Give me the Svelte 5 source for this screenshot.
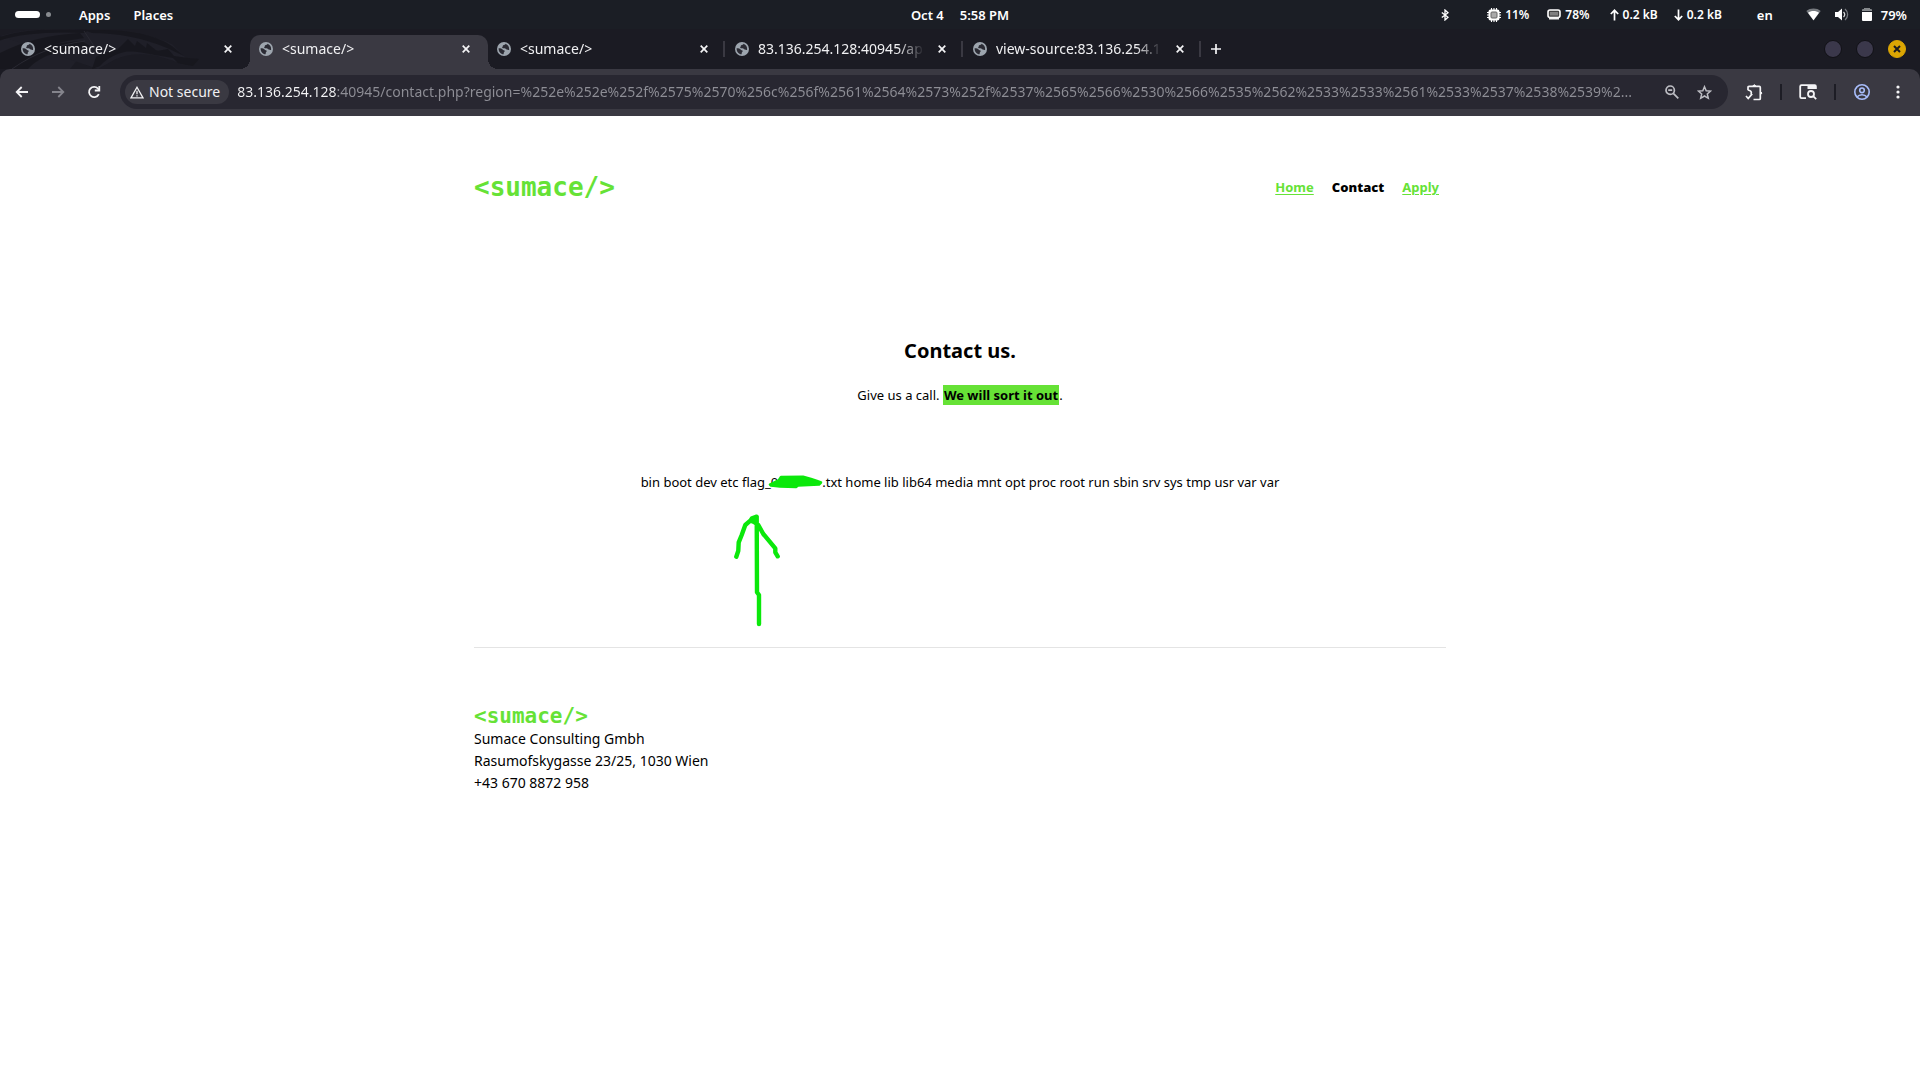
<script>
  const tabs = [
    { title: '<sumace/>' },
    { title: '<sumace/>', active: true },
    { title: '<sumace/>', divider: true },
    { title: '83.136.254.128:40945/apply.php', divider: true },
    { title: 'view-source:83.136.254.128:40945', divider: true }
  ];
  const host = '83.136.254.128';
  const path = ':40945/contact.php?region=%252e%252e%252f%2575%2570%256c%256f%2561%2564%2573%252f%2537%2565%2566%2530%2566%2535%2562%2533%2533%2561%2533%2537%2538%2539%2...';
</script>

<div class="desktop">
  <header class="system">
    <div class="side">
      <button class="spaces" aria-label="Workspaces"><i class="current"></i><i class="dot"></i></button>
      <button class="apps">Apps</button>
      <button>Places</button>
    </div>
    <button class="clock"><span>Oct 4</span><span>5:58 PM</span></button>
    <div class="side status">
      <svg class="bt" width="8" height="12" viewBox="0 0 8 12" fill="none" stroke="#fff" stroke-width="1.3"><path d="M.8 3.4 7 8.3 4 11V1l3 2.7L.8 8.6" /></svg>
      <span class="stat cpu">
        <svg width="14" height="14" viewBox="0 0 14 14"><path d="M4.500 0v14M7 0v14M9.500 0v14M0 4.500h14M0 7h14M0 9.500h14" stroke="#fff" stroke-width="1.100" /><rect x="1.500" y="1.500" width="11" height="11" rx="2" fill="#fff" /><rect x="4" y="4" width="6" height="6" rx="1" fill="#aaa" stroke="#666" /></svg>
        11%
      </span>
      <span class="stat ram">
        <svg width="14" height="11" viewBox="0 0 14 11"><rect x="1" y="1" width="12" height="7.500" rx="2" fill="#444" stroke="#fff" stroke-width="1.600" /><path d="M4 3v3.500M6 3v3.500M8 3v3.500M10 3v3.500" stroke="#bbb" /><path d="M2 8.500h10v2H2z" fill="#eee" /></svg>
        78%
      </span>
      <span class="stat up"><svg width="9" height="12" viewBox="0 0 9 12" fill="none" stroke="#fff" stroke-width="1.700"><path d="M4.500 11.500V1.500M.8 5l3.700-3.700L8.200 5" /></svg>0.2 kB</span>
      <span class="stat down"><svg width="9" height="12" viewBox="0 0 9 12" fill="none" stroke="#fff" stroke-width="1.700"><path d="M4.500.5v10M.8 7l3.700 3.700L8.200 7" /></svg>0.2 kB</span>
      <button class="lang">en</button>
      <button class="tray" aria-label="System menu, battery 79%">
        <svg width="15" height="13" viewBox="0 0 15 13"><path d="M.3 3C4-.3 11-.3 14.700 3L7.500 12.500z" fill="#777b80" /><path d="M2 4.800C5 2.300 10 2.300 13 4.800L7.500 12.300z" fill="#fff" /></svg>
        <svg width="15" height="13" viewBox="0 0 15 13"><path d="M1 4h3l4-3.500v12L4 9H1z" fill="#fff" /><path d="M9.500 4c1.500 1.500 1.500 3.500 0 5" stroke="#ddd" stroke-width="1.200" fill="none" /><path d="M11 1c3.500 3 3.500 8 0 11" stroke="#777b80" stroke-width="1.300" fill="none" /></svg>
        <svg width="10" height="13" viewBox="0 0 10 13"><path d="M0 3V2q0-1 1-1h1V0h6v1h1q1 0 1 1v1z" fill="#85888c" /><path d="M0 4h10v8q0 1-1 1H1q-1 0-1-1z" fill="#fff" /></svg>
        <span>79%</span>
      </button>
    </div>
  </header>

  <nav class="strip" aria-label="Tabs">
    <svg class="dragon" width="204" height="40" viewBox="0 0 204 40" aria-hidden="true">
      <path d="M0 12C14 4 34 1 58 2l26 1 12 9-14 13-12 15H0z" fill="#202029" />
      <path d="M0 7C24 0 50-1 84 1c40-1 70 5 88 14l14 14 12 1-8 6-14-3c-18-7-40-12-62-2l-16 9" fill="#1f1f28" />
      <path d="M0 8C24 0 50 0 88 1l-3 3C50 2 20 5 0 11zM0 24C24 12 48 6 80 4l4 5C54 13 30 22 12 40H0zM84 1h18c25 0 52 4 70 16l12 10-17-8C144 9 116 4 92 4zM8 36C28 19 52 14 82 12l8 5C56 22 40 27 28 40H6zM128 10l7 7 2-5 9 7 1-5 10 8 11-2 6 7 14 2 11 1-6 7-15-3-5-5-18-3c-15-3-27-5-40-3zM96 28c20-10 45-12 66-5-25-4-48-2-62 14l-8 3z" fill="#16161c" opacity=".85" />
      <path d="M12 40C36 23 58 16 85 12M84 2l10 15" stroke="#292932" fill="none" />
    </svg>
    {#each tabs as tab}
      <div class="tab" class:active={tab.active} class:divider={tab.divider}>
        <svg width="14" height="14" viewBox="0 0 14 14"><circle cx="7" cy="7" r="7" fill="#9da5ae" /><path d="M1.600 6.300c2 .1 3.500.2 4 1.300s1.800.3 2 1.400-.9 1-.9 2v1.300C4 12.500 1.500 10 1.600 6.300zM8.500 1.700c-.1 1.300-1.500 1.100-2.300 1.500s-.2 1.600-.9 2 .5 1.300 1.900 1.100 1.600 1.100 2.600 1.300 1.500.8 2.300.3C12.500 5 11 2.500 8.500 1.700z" fill="#2b2b34" /></svg>
        <button class="title">{tab.title}</button>
        <button aria-label="Close tab"><svg width="8" height="8" viewBox="0 0 8 8"><path d="M.7.7l6.600 6.600M7.300.7.7 7.300" stroke="#f4f4f6" stroke-width="1.700" /></svg></button>
      </div>
    {/each}
    <button class="new" aria-label="New tab"><svg width="10" height="10" viewBox="0 0 10 10"><path d="M5 0v10M0 5h10" stroke="#f4f4f6" stroke-width="1.700" /></svg></button>
    <div class="window">
      <button aria-label="Minimize"></button>
      <button aria-label="Maximize"></button>
      <button class="quit" aria-label="Close window"><svg width="8" height="8" viewBox="0 0 8 8"><path d="M1 1l6 6M7 1 1 7" stroke="#1b1b20" stroke-width="2" /></svg></button>
    </div>
  </nav>

  <div class="toolbarback">
    <div class="toolbar">
      <button class="tool" aria-label="Back"><svg width="14" height="12" viewBox="0 0 14 12" fill="none" stroke="#f4f4f6" stroke-width="1.800"><path d="M13 6H1.800M6.700 1l-5 5 5 5" /></svg></button>
      <button class="tool" aria-label="Forward" disabled><svg width="14" height="12" viewBox="0 0 14 12" fill="none" stroke="#84848c" stroke-width="1.800"><path d="M1 6h11.200M7.300 1l5 5-5 5" /></svg></button>
      <button class="tool" aria-label="Reload"><svg width="14" height="14" viewBox="0 0 14 14" fill="none" stroke="#f4f4f6" stroke-width="1.800"><path d="M11.800 9.100A5.100 5.100 0 1 1 11 3.600l1.200 1.300" /><path d="M12.300 1v4.500H7.800" /></svg></button>
      <div class="address">
        <button class="secure"><svg width="14" height="13" viewBox="0 0 14 13" fill="none" stroke="#f0f0f2" stroke-width="1.300"><path d="M7 1.300 13 11.900H1zM7 4.800v3.400M7 9.200v1.300" /></svg>Not secure</button>
        <input aria-label="Address" value={host + path} spellcheck="false" />
        <button class="pic" aria-label="Zoom"><svg width="14" height="14" viewBox="0 0 14 14" fill="none" stroke="#bdbdc3" stroke-width="1.700"><circle cx="5.200" cy="5.200" r="4.200" /><path d="m8.300 8.300 5 5M3.200 5.200h4" /></svg></button>
        <button class="pic" aria-label="Bookmark this page"><svg width="15" height="15" viewBox="0 0 15 15" fill="none" stroke="#bdbdc3" stroke-width="1.500"><path d="m7.500 1.700 1.700 4 4.400.4-3.300 2.900 1 4.300-3.800-2.300-3.800 2.300 1-4.300L1.400 6.100l4.400-.4z" /></svg></button>
      </div>
      <button class="tool" aria-label="Extensions"><svg width="18" height="17" viewBox="0 0 18 17" fill="none" stroke="#f4f4f6" stroke-width="1.700"><path d="M3 6.200V3.400Q3 2.400 4 2.400H14.300Q15.300 2.400 15.300 3.400V14.500Q15.300 15.500 14.300 15.500H8.500M3 6C6 6.500 7 8 6 10.400M1 12l2.200 2.500 4-4.600" /><path d="M7.600 2.200Q9.300-.8 11 2.200zM15.500 7.500q3 1.500 0 3.200z" fill="#f4f4f6" stroke-width="1" /></svg></button>
      <i class="rule"></i>
      <button class="tool" aria-label="Search with Lens"><svg width="18" height="16" viewBox="0 0 18 16" fill="none" stroke="#f4f4f6" stroke-width="1.800"><path d="M7 14.100H2.500Q1.200 14.100 1.200 12.800V2.500Q1.200 1.200 2.500 1.200h13.200q1.200 0 1.200 1.300V5" /><path d="M8.500 1h8.500v4H8.500z" fill="#f4f4f6" stroke="none" /><circle cx="12" cy="10" r="3" /><path d="m14.200 12.200 3 3" /></svg></button>
      <i class="rule"></i>
      <button class="tool" aria-label="Profile"><svg width="16" height="16" viewBox="0 0 16 16" fill="none" stroke="#a8bdfa" stroke-width="1.600"><circle cx="8" cy="8" r="7.200" /><circle cx="8" cy="6.300" r="2.300" /><path d="M3 13c2.500-3 7.500-3 10 0" /></svg></button>
      <button class="tool" aria-label="Menu"><svg width="4" height="14" viewBox="0 0 4 14" fill="#f4f4f6"><circle cx="2" cy="2" r="1.600" /><circle cx="2" cy="7" r="1.600" /><circle cx="2" cy="12" r="1.600" /></svg></button>
    </div>
  </div>

  <main class="page">
    <header class="masthead">
      <div class="logo">&lt;sumace/&gt;</div>
      <nav class="menu"><a href="#home">Home</a><strong>Contact</strong><a href="#apply">Apply</a></nav>
    </header>
    <section>
      <h1>Contact us.</h1>
      <p>Give us a call. <mark>We will sort it out</mark>.</p>
      <p class="listing">bin boot dev etc flag_<span class="hidden">0<svg width="110" height="162" viewBox="0 0 110 162" fill="none" stroke="#0be80b" stroke-linecap="round" stroke-linejoin="round" aria-hidden="true">
        <path d="M41 17.500 45 15.500 50 13 52 10 74 9.700 82 12 88 14 92 15.500 90 17.500 69 18.500 67 20 51 19.500 42 18.500z" fill="#0be80b" stroke-width="2.500" />
        <path d="M7.300 89.700 9.300 83.700 9.700 75.300 12.700 68 16.300 58 21.300 53.700 23 51.300 27.700 49.700 28 125.300 30 128V157M22 53.700 25 55 29.300 58 34.300 67 46.300 81.300V85.300L48.700 89.300" stroke-width="4.400" />
      </svg></span>.txt home lib lib64 media mnt opt proc root run sbin srv sys tmp usr var var</p>
    </section>
    <footer>
      <div class="logo small">&lt;sumace/&gt;</div>
      <address>Sumace Consulting Gmbh<br />Rasumofskygasse 23/25, 1030 Wien<br />+43 670 8872 958</address>
    </footer>
  </main>
</div>

<style>
  :global(body) { margin: 0; background: #fff; }
  .desktop { min-height: 100vh; font: 14px/20px "Noto Sans", "Open Sans", sans-serif; color: #000; }
  button { border: 0; padding: 0; background: none; color: inherit; font: inherit; flex: none; }
  svg { display: block; flex: none; }

  .system { display: grid; grid-template-columns: 1fr auto 1fr; align-items: center; height: 29px; background: #1b1e25; color: #fff; font-size: 13px; font-weight: 600; }
  .side { display: flex; align-items: center; padding-left: 15px; }
  .spaces { display: flex; align-items: center; gap: 6px; }
  .current { width: 25px; height: 7px; border-radius: 4px; background: #fff; }
  .dot { width: 5px; height: 5px; border-radius: 50%; background: #888b8f; }
  .apps { margin: 0 23px 0 28px; }
  .clock { display: flex; gap: 16px; }
  .status { justify-content: flex-end; padding: 0 13px 0 0; }
  .stat { display: flex; align-items: center; gap: 4px; font-size: 12px; white-space: nowrap; }
  .cpu { margin-left: 38px; }
  .ram { margin-left: 18px; }
  .down { margin-left: 16px; }
  .up { margin-left: 20px; }
  .lang { margin-left: 35px; }
  .tray { display: flex; align-items: center; gap: 13px; margin-left: 33px; }
  .tray span { margin-left: -4px; }

  .strip { position: relative; display: flex; align-items: center; height: 40px; padding: 0 14px 0 12px; background: #1b1b23; color: #f0f0f2; }
  .dragon { position: absolute; left: 0; top: 0; }
  .tab { position: relative; display: flex; align-items: center; flex: 0 1 238px; min-width: 0; height: 34px; margin-top: 6px; box-sizing: border-box; padding: 0 18px 6px 9px; }
  .active { background: #3a3942; border-radius: 10px 10px 0 0; }
  .active::before, .active::after { content: ""; position: absolute; bottom: 0; width: 10px; height: 10px; background: radial-gradient(circle at 0 0, transparent 10px, #3a3942 10px); }
  .active::before { right: 100%; }
  .active::after { left: 100%; background: radial-gradient(circle at 100% 0, transparent 10px, #3a3942 10px); }
  .divider::after { content: ""; position: absolute; right: 1px; top: 6px; width: 2px; height: 16px; background: #3a3942; }
  .title { flex: 1; min-width: 0; margin: 0 14px 0 9px; overflow: hidden; text-align: left; white-space: nowrap; mask-image: linear-gradient(90deg, #000 calc(100% - 26px), transparent); }
  .new { margin-left: 9px; }
  .window { display: flex; align-items: center; gap: 14px; margin-left: auto; }
  .window button { display: grid; place-items: center; width: 18px; height: 18px; border: 1px solid #111116; border-radius: 50%; background: #3b384b; }
  .window .quit { border-color: #dca603; background: #dca603; }

  .toolbarback { background: #1b1b23; }
  .toolbar { display: flex; align-items: center; height: 47px; box-sizing: border-box; padding: 6px 4px 7px; border-radius: 10px 10px 0 0; background: #3a3942; }
  .tool { display: grid; place-items: center; width: 36px; height: 34px; }
  .rule { flex: none; width: 2px; height: 16px; margin: 0 8px; background: #1d1d25; }
  .address { display: flex; align-items: center; flex: 1; min-width: 0; height: 34px; margin: 0 8px; box-sizing: border-box; padding: 0 8px 0 5px; border-radius: 17px; background: #282731; }
  .secure { display: flex; align-items: center; gap: 5px; height: 24px; padding: 0 9px 0 5px; border-radius: 12px; background: #3a3942; color: #f0f0f2; }
  .address input { flex: 1; min-width: 0; margin: 0 8px; padding: 0; border: 0; outline: 0; font: inherit; color: transparent; background: linear-gradient(90deg, #f4f4f6 99px, #8e8e96 99px); background-clip: text; -webkit-text-fill-color: transparent; }
  .pic { display: grid; place-items: center; width: 32px; height: 28px; }

  .page { max-width: 972px; margin: 0 auto; font-size: 14px; line-height: 22px; }
  .masthead { display: flex; align-items: center; justify-content: space-between; padding: 56px 7px 0 0; }
  .logo { color: #66e236; font: bold 26px/30px "DejaVu Sans Mono", monospace; }
  .menu { display: flex; gap: 18px; font-size: 13px; font-weight: 700; }
  a { color: #66e236; text-underline-offset: 2px; }
  section { padding-top: 133px; text-align: center; }
  h1 { margin: 0; font-size: 20px; line-height: 32px; font-weight: 700; }
  p { margin: 17px 0 0; font-size: 13px; }
  mark { padding: 1px; background: #66e236; font-weight: 700; }
  .listing { margin-top: 65px; }
  .hidden { position: relative; padding-right: 44px; }
  .hidden svg { position: absolute; left: -42px; top: -6px; }
  footer { margin-top: 154px; padding-top: 56px; border-top: 1px solid #e4e4e4; }
  .small { font-size: 21px; line-height: 24px; }
  address { font-style: normal; }
</style>
